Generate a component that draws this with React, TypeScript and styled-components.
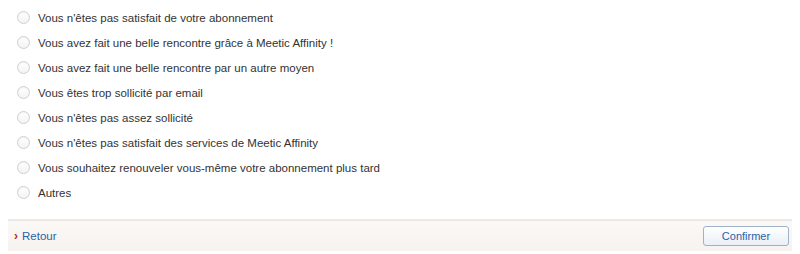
import React, { useState } from 'react';
import styled, { createGlobalStyle } from 'styled-components';

const GlobalStyle = createGlobalStyle`
    body {
        margin: 0;
        background: #ffffff;
        font-family: Helvetica, "Liberation Sans", Arial, sans-serif;
    }
`;

const Page = styled.div`
    width: 800px;
    height: 254px;
    display: flex;
    flex-direction: column;
    background: #ffffff;
`;

const Options = styled.div`
    display: flex;
    flex-direction: column;
    padding: 5px 0 0 17px;
    height: 214px;
`;

const Option = styled.label`
    display: flex;
    align-items: center;
    height: 25px;
    gap: 8px;
    font-size: 11.5px;
    color: #333333;
    cursor: pointer;
`;

const Radio = styled.span<{ checked: boolean }>`
    width: 11px;
    height: 11px;
    border-radius: 50%;
    border: 1px solid #d0d0d0;
    background: linear-gradient(#ffffff, #f3f3f3);
    box-shadow: inset 0 1px 1px rgba(0, 0, 0, 0.05);
    display: flex;
    align-items: center;
    justify-content: center;
    &::after {
        content: '';
        width: 5px;
        height: 5px;
        border-radius: 50%;
        background: ${p => (p.checked ? '#3a6fb0' : 'transparent')};
    }
`;

const Footer = styled.div`
    margin: 0 8px;
    height: 30px;
    border-top: 2px solid #ece8e5;
    background: linear-gradient(#fbf8f6, #f6f2ef);
    display: flex;
    align-items: center;
    justify-content: space-between;
    padding: 0 3px 0 6px;
`;

const BackLink = styled.a`
    display: flex;
    align-items: center;
    gap: 4px;
    font-size: 11.5px;
    color: #2a62a8;
    text-decoration: none;
    cursor: pointer;
`;

const Chevron = styled.span`
    color: #b8262b;
    font-size: 12px;
    font-weight: bold;
`;

const ConfirmButton = styled.button`
    width: 86px;
    height: 20px;
    border: 1px solid #9fb3c8;
    border-radius: 3px;
    background: linear-gradient(#ffffff, #e9eff6);
    color: #2a62a8;
    font-family: Helvetica, "Liberation Sans", Arial, sans-serif;
    font-size: 11px;
    padding: 0;
    cursor: pointer;
`;

const raisons = [
    "Vous n'êtes pas satisfait de votre abonnement",
    'Vous avez fait une belle rencontre grâce à Meetic Affinity !',
    'Vous avez fait une belle rencontre par un autre moyen',
    'Vous êtes trop sollicité par email',
    "Vous n'êtes pas assez sollicité",
    "Vous n'êtes pas satisfait des services de Meetic Affinity",
    'Vous souhaitez renouveler vous-même votre abonnement plus tard',
    'Autres',
];

const App = () => {
    const [choix, setChoix] = useState<number | null>(null);

    return (
        <Page>
            <GlobalStyle />
            <Options>
                {raisons.map((r, i) => (
                    <Option key={i} onClick={() => setChoix(i)}>
                        <Radio checked={choix === i} />
                        <span>{r}</span>
                    </Option>
                ))}
            </Options>
            <Footer>
                <BackLink>
                    <Chevron>›</Chevron>
                    Retour
                </BackLink>
                <ConfirmButton>Confirmer</ConfirmButton>
            </Footer>
        </Page>
    );
};

export default App;
